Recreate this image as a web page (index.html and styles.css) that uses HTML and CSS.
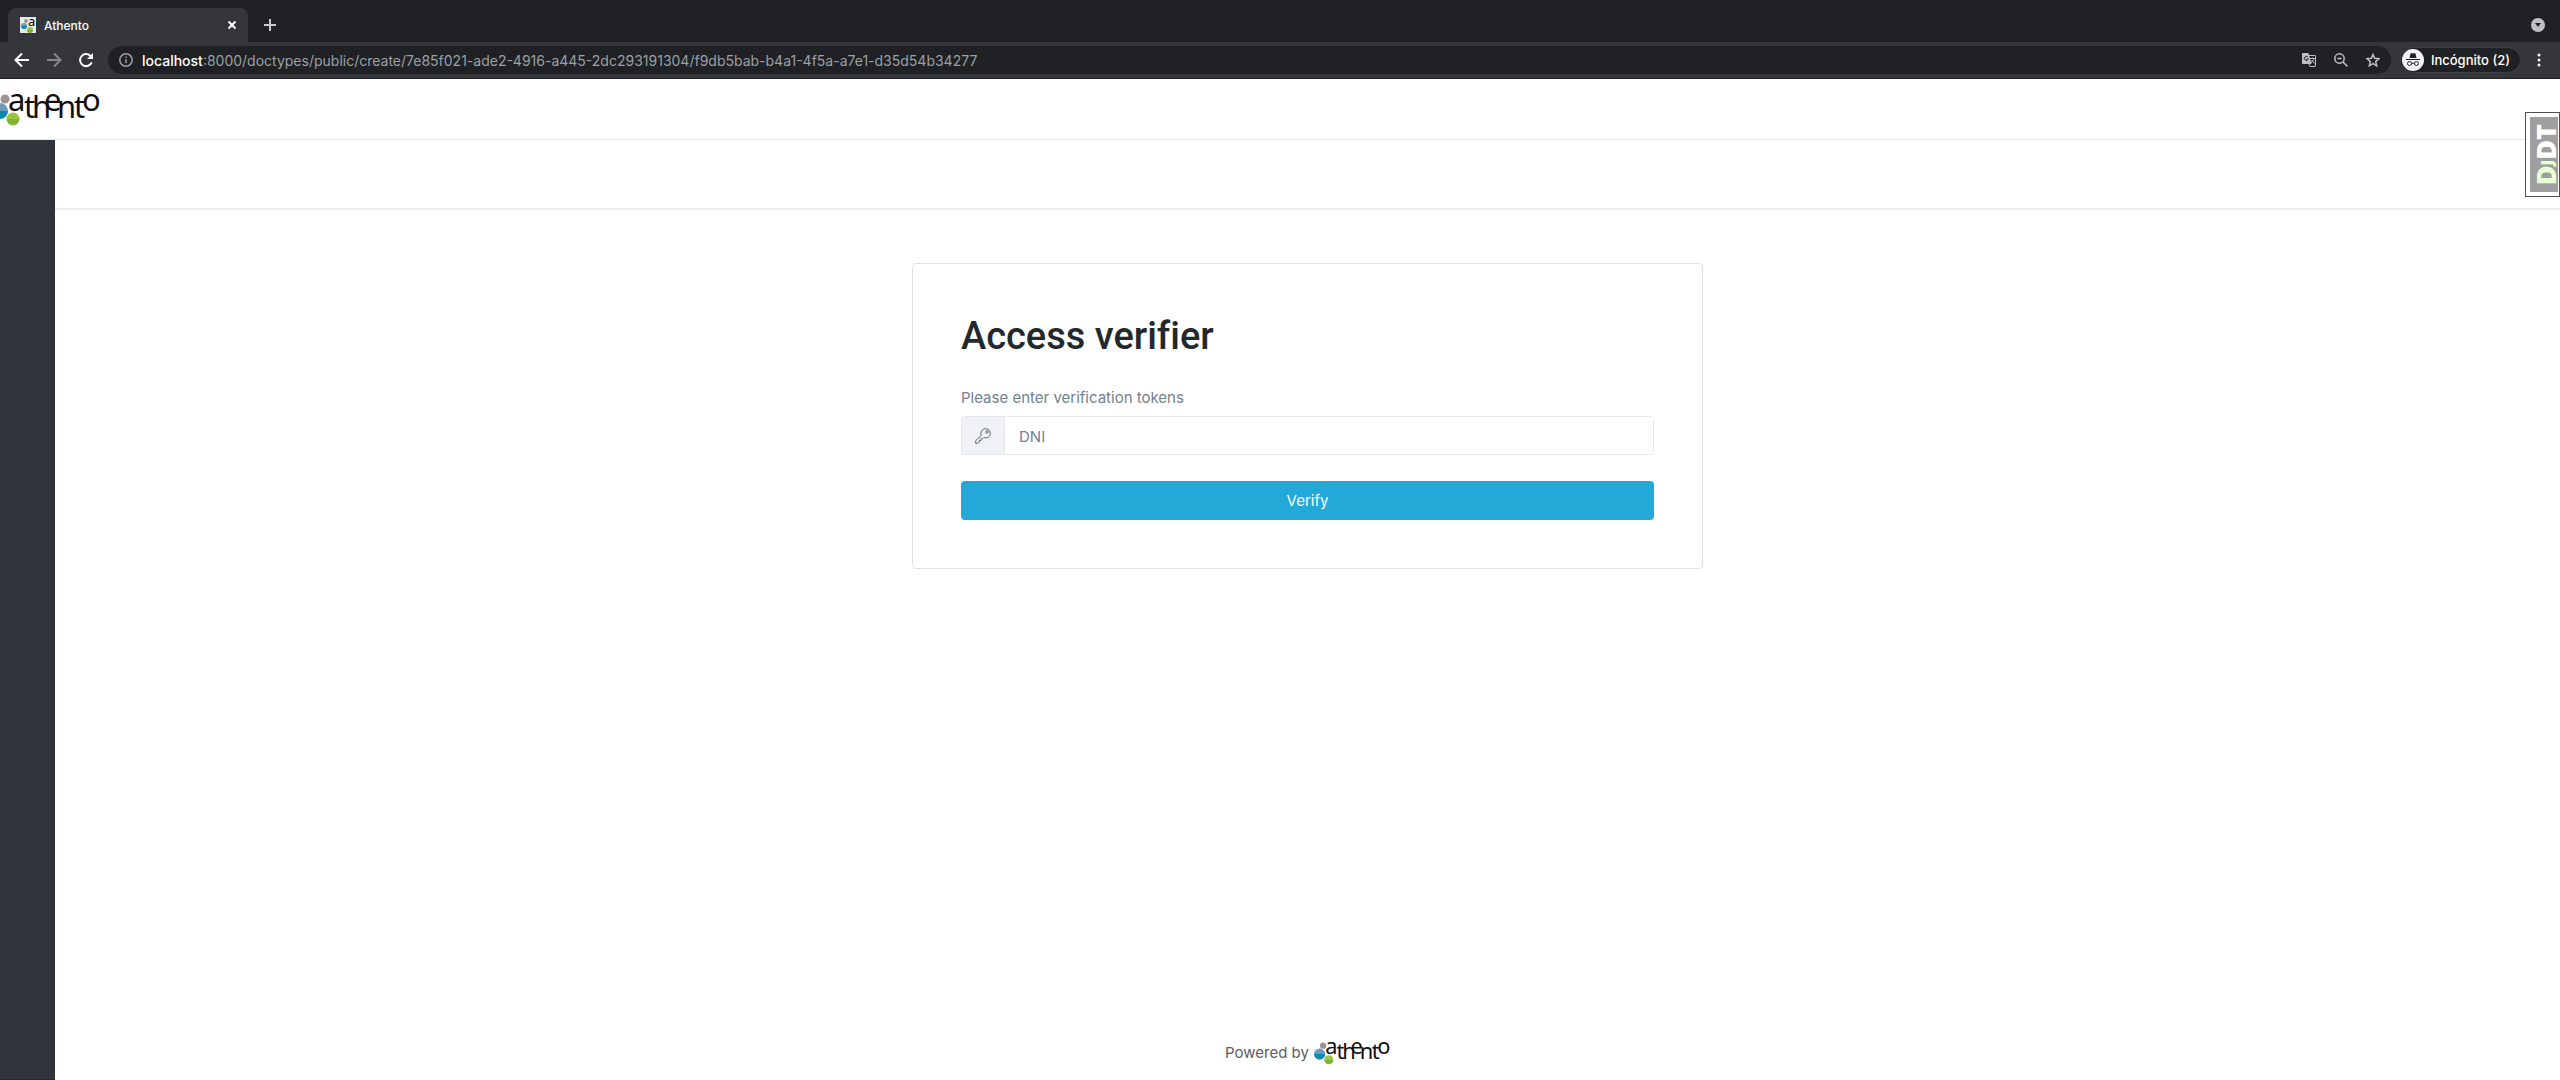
FILE: index.html
```html
<!DOCTYPE html>
<html lang="en">
<head>
    <meta charset="UTF-8">
    <meta name="viewport" content="width=device-width, initial-scale=1.0">
    <title>Athento</title>
    <link rel="stylesheet" href="styles.css">
</head>
<body>
    <!-- Shared drawings -->
    <svg class="defs" aria-hidden="true">
        <defs>
            <linearGradient id="blue" x1="0" y1="0" x2="0" y2="1">
                <stop offset="0.5" stop-color="#6a9db8"/>
                <stop offset="0.5" stop-color="#0f86b0"/>
            </linearGradient>
            <linearGradient id="green" x1="0" y1="0" x2="0" y2="1">
                <stop offset="0.5" stop-color="#9cc43c"/>
                <stop offset="0.5" stop-color="#80b439"/>
            </linearGradient>
            <symbol id="athento-logo" viewBox="0 0 108 36">
                <circle cx="13" cy="9" r="4.500" fill="#a0938f"/>
                <circle cx="8" cy="21" r="8" fill="url(#blue)"/>
                <circle cx="21" cy="29" r="6.500" fill="url(#green)"/>
                <text class="logo-text" x="16 32 40 52 65 82 90" y="21 28 28 21 28 28 21">athento</text>
            </symbol>
        </defs>
    </svg>

    <div class="browser">
        <div class="tabs">
            <div class="tab">
                <svg class="favicon" viewBox="0 0 16 16" aria-hidden="true">
                    <rect width="16" height="16" fill="#e8e8e8"/>
                    <circle cx="6" cy="4" r="2" fill="#a0938f"/>
                    <circle cx="4" cy="9" r="3" fill="url(#blue)"/>
                    <circle cx="10" cy="13" r="3" fill="url(#green)"/>
                    <text class="favicon-text" x="8" y="9">a</text>
                </svg>
                <span class="tab-title">Athento</span>
                <button class="icon-button" aria-label="Close tab">
                    <svg class="icon-close" viewBox="0 0 10 10"><path d="M1.5 1.5l7 7M8.5 1.5l-7 7"/></svg>
                </button>
            </div>
            <button class="icon-button new-tab" aria-label="New tab">
                <svg class="icon-plus" viewBox="0 0 12 12"><path d="M6 0v12M0 6h12"/></svg>
            </button>
            <button class="icon-button tab-search" aria-label="Search tabs">
                <svg class="icon-search-tabs" viewBox="0 0 14 14"><circle cx="7" cy="7" r="7"/><path d="M4 5h6l-3 4z"/></svg>
            </button>
        </div>
        <div class="toolbar">
            <button class="icon-button" aria-label="Back">
                <svg class="icon-nav" viewBox="0 0 16 16"><path d="M15 8H2M8 1.500L1.500 8 8 14.500"/></svg>
            </button>
            <button class="icon-button" aria-label="Forward" disabled>
                <svg class="icon-nav" viewBox="0 0 16 16"><path d="M1 8h13M8 1.500L14.500 8 8 14.500"/></svg>
            </button>
            <button class="icon-button" aria-label="Reload">
                <svg class="icon-nav" viewBox="0 0 16 16"><path d="M13.700 10.300A6 6 0 1 1 12.300 3.800L14 5.500"/><path class="solid" d="M15 1v6H9z"/></svg>
            </button>
            <div class="address">
                <svg class="icon-small" viewBox="0 0 14 14" aria-hidden="true"><circle cx="7" cy="7" r="6.200"/><path d="M7 6.200v4M7 3.500v1.500"/></svg>
                <a class="url" href="#"><span class="host">localhost</span>:8000/doctypes/public/create/7e85f021-ade2-4916-a445-2dc293191304/f9db5bab-b4a1-4f5a-a7e1-d35d54b34277</a>
                <div class="address-actions">
                    <button class="icon-button" aria-label="Translate this page">
                        <svg class="icon-small" viewBox="0 0 14 14">
                            <path class="solid" d="M1 0h5.500L9.500 11H1a1 1 0 0 1-1-1V1a1 1 0 0 1 1-1z"/>
                            <path class="thin" d="M7 2.500h6a.5.5 0 0 1 .5.500v10a.5.5 0 0 1-.5.500H8L7 11M8 5.500h5M10.500 4.500v1M12 5.500c-.5 2-1.500 3-3 4M9.500 7l3 3.500"/>
                            <path class="mark" d="M6 4.200A2 2 0 1 0 6.300 6H4.500"/>
                        </svg>
                    </button>
                    <button class="icon-button" aria-label="Zoom">
                        <svg class="icon-small" viewBox="0 0 14 14"><circle cx="5.500" cy="5.500" r="4.700"/><path d="M9 9l4.500 4.500M3.500 5.500h4"/></svg>
                    </button>
                    <button class="icon-button" aria-label="Bookmark this page">
                        <svg class="icon-small" viewBox="0 0 14 14"><path d="M7 1.500l1.600 3.800 4.400.4-3.300 2.900 1 4.200L7 10.600l-3.700 2.200 1-4.200L1 5.700l4.400-.4z"/></svg>
                    </button>
                </div>
            </div>
            <button class="incognito">
                <svg class="icon-incognito" viewBox="0 0 22 22" aria-hidden="true">
                    <circle cx="11" cy="11" r="11"/>
                    <path class="hat" d="M7.500 9l1-4.300q.3-.8 1.200-.5l1.300.4 1.300-.4q.9-.3 1.200.5l1 4.300z"/>
                    <path class="glasses" d="M4 10.500h14M9.600 14.500q1.400-.8 2.800 0"/>
                    <circle class="glasses" cx="7.500" cy="14.500" r="2"/>
                    <circle class="glasses" cx="14.500" cy="14.500" r="2"/>
                </svg>
                Incógnito (2)
            </button>
            <button class="icon-button menu" aria-label="Menu">
                <svg class="icon-dots" viewBox="0 0 4 14"><circle cx="2" cy="2" r="1.500"/><circle cx="2" cy="7" r="1.500"/><circle cx="2" cy="12" r="1.500"/></svg>
            </button>
        </div>
    </div>

    <header class="app-header">
        <a class="brand" href="#" aria-label="Athento">
            <svg class="brand-logo" viewBox="0 0 108 36"><use href="#athento-logo"/></svg>
        </a>
    </header>

    <div class="app-body">
        <aside class="sidebar"></aside>
        <div class="content">
            <div class="breadcrumb"></div>
            <main class="main">
                <form class="card">
                    <h1>Access verifier</h1>
                    <label class="hint" for="dni">Please enter verification tokens</label>
                    <div class="input-group">
                        <span class="input-icon">
                            <svg class="icon-key" viewBox="0 0 16 16" aria-hidden="true">
                                <path d="M6.200 7.500C4.900 4 7.200.7 10.600.7A4.600 4.600 0 0 1 15.300 5.400C15.300 8.800 12 10.700 8.800 9.600L7.600 10.800H6v1.700H4.300v1.500L3 15.300H.7v-2.600z"/>
                                <circle cx="12" cy="4" r="1.200"/>
                            </svg>
                        </span>
                        <input type="text" id="dni" name="dni" placeholder="DNI">
                    </div>
                    <button type="submit" class="verify">Verify</button>
                </form>
            </main>
            <footer class="footer">
                <span>Powered by</span>
                <svg class="footer-logo" viewBox="0 0 108 36" role="img" aria-label="Athento"><use href="#athento-logo"/></svg>
            </footer>
        </div>
    </div>

    <a class="debug-toolbar" href="#" title="Show toolbar"><span class="debug-handle"><span><span class="dj">D<small>J</small></span>DT</span></span></a>
</body>
</html>
```
FILE: styles.css
```css
* {
    box-sizing: border-box;
}

body {
    margin: 0;
    min-height: 100vh;
    display: flex;
    flex-direction: column;
    background-color: #fff;
    color: #23282c;
    font-family: Inter, 'Liberation Sans', sans-serif;
    font-size: 15px;
}

button {
    font-family: inherit;
    border: none;
    cursor: pointer;
}

svg {
    display: block;
    flex: none;
    fill: none;
    stroke: currentColor;
}

.defs {
    position: absolute;
    width: 0;
    height: 0;
}

.solid {
    fill: currentColor;
    stroke: none;
}

/* Browser bar */
.browser {
    background-color: #35363a;
    color: #fff;
    border-bottom: 1px solid #202124;
}

.tabs {
    display: flex;
    align-items: center;
    height: 42px;
    padding: 8px 15px 0 8px;
    background-color: #202124;
}

.tab {
    display: flex;
    align-items: center;
    gap: 8px;
    width: 240px;
    height: 34px;
    padding: 0 11px 0 12px;
    background-color: #35363a;
    border-radius: 8px 8px 0 0;
}

.favicon {
    width: 16px;
    height: 16px;
    stroke: none;
    overflow: visible;
}

.favicon-text {
    font-family: 'Noto Sans', sans-serif;
    font-size: 13px;
    fill: #000;
}

.tab-title {
    flex: 1;
    font-size: 12px;
    font-weight: 500;
}

.icon-button {
    display: flex;
    align-items: center;
    justify-content: center;
    padding: 0;
    background: none;
    color: inherit;
}

.icon-button:disabled {
    color: #87888b;
}

.icon-close {
    width: 10px;
    height: 10px;
    stroke-width: 2;
}

.icon-plus {
    width: 12px;
    height: 12px;
    stroke-width: 2;
}

.new-tab {
    margin-left: 16px;
    color: #c8cacd;
}

.tab-search {
    margin-left: auto;
}

.icon-search-tabs {
    width: 14px;
    height: 14px;
    fill: #bdc1c6;
    stroke: none;
}

.icon-search-tabs path {
    fill: #202124;
}

.toolbar {
    display: flex;
    align-items: center;
    gap: 16px;
    height: 36px;
    padding: 0 19px 0 14px;
}

.icon-nav {
    width: 16px;
    height: 16px;
    stroke-width: 2;
}

.address {
    flex: 1;
    display: flex;
    align-items: center;
    gap: 9px;
    height: 28px;
    margin-left: -2px;
    padding: 0 11px;
    background-color: #202124;
    border-radius: 14px;
    color: #9aa0a6;
}

.icon-small {
    width: 14px;
    height: 14px;
    stroke-width: 1.5;
}

.thin {
    stroke-width: 1;
}

.mark {
    stroke: #202124;
    stroke-width: 1;
}

.url {
    flex: 1;
    font-size: 14px;
    color: #9aa0a6;
    text-decoration: none;
}

.host {
    color: #fff;
    font-weight: 500;
}

.address-actions {
    display: flex;
    gap: 18px;
    color: #bdc1c6;
}

.incognito {
    display: flex;
    align-items: center;
    gap: 7px;
    height: 26px;
    margin-left: -7px;
    padding: 0 10px 0 1px;
    background-color: #202124;
    border: 1px solid #3c4043;
    border-radius: 13px;
    color: #fff;
    font-size: 13px;
    font-weight: 500;
}

.icon-incognito {
    width: 22px;
    height: 22px;
    fill: #f1f3f4;
    stroke: none;
}

.icon-incognito .hat {
    fill: #202124;
}

.icon-incognito .glasses {
    fill: none;
    stroke: #202124;
}

.icon-dots {
    width: 4px;
    height: 14px;
    fill: currentColor;
    stroke: none;
}

/* Application */
.app-header {
    height: 61px;
    padding-top: 11px;
    border-bottom: 1px solid #e8eaeb;
    overflow: hidden;
}

.brand {
    display: block;
    margin-left: -8px;
}

.brand-logo {
    width: 108px;
    height: 36px;
    stroke: none;
}

.logo-text {
    font-family: 'Noto Sans', sans-serif;
    font-size: 31px;
    fill: #130c0e;
    stroke: none;
}

.app-body {
    flex: 1;
    display: flex;
}

.sidebar {
    width: 55px;
    background-color: #2f353a;
    border-bottom: 1px solid #2b2433;
}

.content {
    flex: 1;
    display: flex;
    flex-direction: column;
}

.breadcrumb {
    height: 70px;
    border-bottom: 2px solid #ebedee;
}

.main {
    flex: 1;
    padding: 53px 32px;
}

.card {
    max-width: 791px;
    margin: 0 auto;
    padding: 48px;
    border: 1px solid #e0e2e4;
    border-radius: 4px;
}

h1 {
    margin: 0 0 26px;
    font-family: Roboto, sans-serif;
    font-size: 38px;
    font-weight: 500;
    line-height: 48px;
    font-variant-ligatures: none;
}

.hint {
    display: block;
    margin-bottom: 7px;
    line-height: 23px;
    color: #73818f;
}

.input-group {
    display: flex;
    height: 39px;
    margin-bottom: 26px;
    border: 1px solid #e4e7ea;
    border-radius: 4px;
    overflow: hidden;
}

.input-icon {
    display: flex;
    align-items: center;
    justify-content: center;
    width: 43px;
    background-color: #f0f3f5;
    border-right: 1px solid #e4e7ea;
    color: #5c6873;
}

.icon-key {
    width: 16px;
    height: 16px;
}

.input-group input {
    flex: 1;
    padding: 2px 14px 0;
    border: none;
    outline: none;
    font-family: inherit;
    font-size: 15px;
}

.input-group input::placeholder {
    color: #73818f;
}

.verify {
    display: block;
    width: 100%;
    height: 39px;
    background-color: #24a8d8;
    border-radius: 4px;
    color: #fff;
    font-size: 15px;
}

.footer {
    display: flex;
    align-items: center;
    justify-content: center;
    gap: 5px;
    height: 56px;
    color: #5c6064;
}

.footer-logo {
    width: 76px;
    height: 26px;
    stroke: none;
}

/* Debug toolbar handle */
.debug-toolbar {
    position: absolute;
    top: 112px;
    right: 0;
    width: 35px;
    height: 85px;
    padding: 4px 0 4px 4px;
    background-color: #fff;
    border: 1px solid #3c3c3c;
    text-decoration: none;
    opacity: 0.9;
}

.debug-handle {
    display: flex;
    align-items: center;
    justify-content: center;
    height: 100%;
    padding-left: 4px;
    background-color: #959595;
    color: #fff;
    font-family: 'Open Sans', sans-serif;
    font-size: 27px;
    font-weight: 800;
    line-height: 24px;
    writing-mode: vertical-rl;
}

.debug-handle > span {
    transform: rotate(180deg);
}

.debug-handle small {
    font-size: 16px;
}

.dj {
    color: #e6ffd2;
}
```
